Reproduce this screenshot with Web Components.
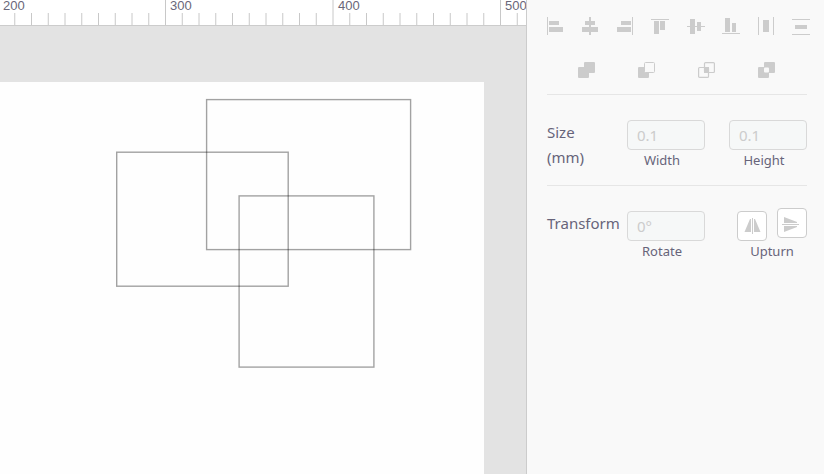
<!DOCTYPE html>
<html lang="en">
<head>
<meta charset="utf-8">
<title>Artboard editor</title>
<style>
html, body { height: 100%; margin: 0; }
body { font-family: "Noto Sans", "Open Sans", sans-serif; color: #67647a; background: #e3e3e3; }
</style>
</head>
<body>
<editor-app></editor-app>
<script>
const define = (name, html, setup) => customElements.define(name, class extends HTMLElement {
  connectedCallback() {
    if (this.shadowRoot) return;
    const root = this.attachShadow({ mode: "open" });
    root.innerHTML = typeof html === "function" ? html(this) : html;
    if (setup) setup(root, this);
  }
});

const rects = list => list.map(([x, y, w, h]) => `<rect x="${x}" y="${y}" width="${w}" height="${h}"/>`).join("");
const icons = {
  left: [18, 18, rects([[1,0,1,18],[3,4,10,4],[3,10,14,5]])],
  center: [18, 18, rects([[8,0,2,18],[4,4,10,4],[1,10,16,5]])],
  right: [18, 18, rects([[16,0,1,18],[5,4,10,4],[1,10,14,5]])],
  top: [18, 18, rects([[0,2,18,1],[3,4,5,13],[9,4,5,9]])],
  middle: [18, 18, rects([[0,9,18,1],[3,2,5,15],[10,5,4,9]])],
  bottom: [18, 18, rects([[0,16,18,1],[3,1,5,14],[10,6,4,9]])],
  spreadX: [18, 18, rects([[1,0,1,18],[16,0,1,18],[6,3,6,12]])],
  spreadY: [18, 18, rects([[0,2,18,1],[0,17,18,1],[3,8,12,4]])],
  unite: [17, 16, `<rect x="6" width="11" height="11" rx="1"/><rect y="5" width="11" height="11" rx="1"/>`],
  subtract: [17, 16, `<rect y="5" width="11" height="11" rx="1"/><rect x="6.5" y=".5" width="10" height="10" rx="1" fill="#f9f9f9" stroke="currentColor"/>`],
  intersect: [17, 16, `<g fill="none" stroke="currentColor" stroke-width="1.2"><rect x="6.5" y=".6" width="9.9" height="9.9" rx="1"/><rect x=".6" y="5.5" width="9.9" height="9.9" rx="1"/></g><rect x="6" y="5" width="5" height="6"/>`],
  exclude: [17, 16, `<rect x="6" width="11" height="11" rx="1"/><rect y="5" width="11" height="11" rx="1"/><rect x="6" y="5.5" width="5" height="5" rx="1" fill="#f9f9f9"/>`],
  flipX: [30, 30, `<path d="M7.5 21 13 8H14V21ZM17 8H18L23.5 21H17Z"/><rect x="15" y="7" width="1" height="16"/>`],
  flipY: [30, 30, `<path d="M7 9 20 14V15H7ZM7 18H20V19L7 24Z"/><rect x="5" y="16" width="17" height="1"/>`]
};

define("tool-button", el => {
  const [w, h, art] = icons[el.getAttribute("icon")];
  return `<style>
    :host { display: grid; place-items: center; }
    button { display: block; padding: 0; border: 0; background: none; color: #ccc; }
    svg { display: block; fill: currentColor; }
    :host([framed]) button { border: 1px solid #ccc; border-radius: 4px; background: #fff; }
    :host([framed]) svg { margin: -1px; }
  </style>
  <button type="button" aria-label="${el.getAttribute("name")}"><svg width="${w}" height="${h}" viewBox="0 0 ${w} ${h}" aria-hidden="true">${art}</svg></button>`;
});

define("tool-row", `<style>
  :host { display: grid; grid-auto-flow: column; grid-auto-columns: 1fr; }
</style><slot></slot>`);

define("number-field", el => `<style>
  :host { display: flex; flex-direction: column; min-width: 0; }
  input { box-sizing: border-box; width: 100%; height: 30px; padding: 0 9px; border: 1px solid #d9d9d9; border-radius: 4px; background: #f6f8f8; font: 15px "Noto Sans", "Open Sans", sans-serif; }
  input::placeholder { color: #ccc; opacity: 1; }
  label { font-size: 13px; line-height: 20px; text-align: center; padding-right: 8px; }
</style>
<input id="f" placeholder="${el.getAttribute("hint")}" disabled><label for="f"><slot></slot></label>`);

define("flip-group", `<style>
  :host { display: block; }
  .pair { display: flex; justify-content: space-between; height: 33px; margin-top: -3px; }
  .pair :first-child { align-self: end; }
  .pair :last-child { align-self: start; }
  .caption { font-size: 13px; line-height: 20px; text-align: center; }
</style>
<div class="pair">
  <tool-button framed icon="flipX" name="Flip horizontally"></tool-button>
  <tool-button framed icon="flipY" name="Flip vertically"></tool-button>
</div>
<div class="caption"><slot></slot></div>`);

define("property-row", `<style>
  :host { display: grid; grid-template-columns: 80px 78px 1fr auto; border-top: 1px solid #e6e6e6; padding-top: 25px; font-size: 15px; line-height: 25px; }
  .fourth { grid-column: 4; }
</style>
<slot name="title"></slot><slot name="first"></slot><div class="fourth"><slot name="second"></slot></div>`);

define("property-panel", `<style>
  :host { box-sizing: border-box; display: flex; flex-direction: column; background: #f9f9f9; border-left: 1px solid #ccc; padding-top: 17px; }
  .align { padding: 0 5px 0 10px; }
  .combine { padding: 27px 28px 16px 29px; }
  .rows { display: grid; gap: 15px; padding: 0 17px 0 20px; }
  .size { width: 50px; }
  .wide { width: 78px; }
  .flip { width: 70px; }
</style>
<tool-row class="align">
  <tool-button icon="left" name="Align left"></tool-button>
  <tool-button icon="center" name="Align center"></tool-button>
  <tool-button icon="right" name="Align right"></tool-button>
  <tool-button icon="top" name="Align top"></tool-button>
  <tool-button icon="middle" name="Align middle"></tool-button>
  <tool-button icon="bottom" name="Align bottom"></tool-button>
  <tool-button icon="spreadX" name="Distribute horizontally"></tool-button>
  <tool-button icon="spreadY" name="Distribute vertically"></tool-button>
</tool-row>
<tool-row class="combine">
  <tool-button icon="unite" name="Unite"></tool-button>
  <tool-button icon="subtract" name="Subtract"></tool-button>
  <tool-button icon="intersect" name="Intersect"></tool-button>
  <tool-button icon="exclude" name="Exclude"></tool-button>
</tool-row>
<div class="rows">
  <property-row>
    <div slot="title" class="size">Size (mm)</div>
    <number-field slot="first" hint="0.1">Width</number-field>
    <number-field slot="second" class="wide" hint="0.1">Height</number-field>
  </property-row>
  <property-row>
    <div slot="title">Transform</div>
    <number-field slot="first" hint="0°">Rotate</number-field>
    <flip-group slot="second" class="flip">Upturn</flip-group>
  </property-row>
</div>`);

define("canvas-ruler", `<style>
  :host { display: block; height: 25px; background: #fff; border-bottom: 1px solid #ccc; }
  svg { display: block; width: 100%; height: 25px; overflow: visible; }
  path { stroke: #c8c8c8; fill: none; }
  text { font: 13px "Liberation Sans", sans-serif; fill: #6a6779; }
</style><svg></svg>`, (root, host) => {
  // 100 units span 167.5px; the 200 mark lies just left of the visible area.
  const step = 16.75, origin = -2;
  const svg = root.querySelector("svg");
  const draw = () => {
    let ticks = "", labels = "";
    for (let i = 0, x = origin; x < host.clientWidth; x = origin + ++i * step) {
      const major = i % 10 === 0;
      ticks += `M${x} ${major ? 0 : 13}V25`;
      if (major) labels += `<text x="${Math.floor(x + 5)}" y="10">${200 + i * 10}</text>`;
    }
    svg.innerHTML = `<path d="${ticks}"/>${labels}`;
  };
  draw();
  new ResizeObserver(draw).observe(host);
});

define("art-board", `<style>
  :host { display: block; overflow: hidden; background: #fefefe; }
  svg { display: block; width: 100%; height: 100%; }
  rect { fill: none; stroke: #000; stroke-opacity: .36; stroke-width: 1.4; }
</style>
<svg role="img" aria-label="Three overlapping rectangles">
  <rect x="206.6" y="17.6" width="204" height="150"/>
  <rect x="116.7" y="70.2" width="171.5" height="134"/>
  <rect x="239.1" y="113.9" width="134.8" height="171.2"/>
</svg>`);

define("editor-app", `<style>
  :host { display: grid; grid-template-columns: minmax(0, 1fr) 298px; min-height: 100vh; }
  main { display: grid; grid-template-rows: auto minmax(0, 1fr); min-width: 0; background: #e3e3e3; }
  art-board { margin: 56px 42px 0 0; }
</style>
<main><canvas-ruler></canvas-ruler><art-board></art-board></main>
<property-panel></property-panel>`);
</script>
</body>
</html>
